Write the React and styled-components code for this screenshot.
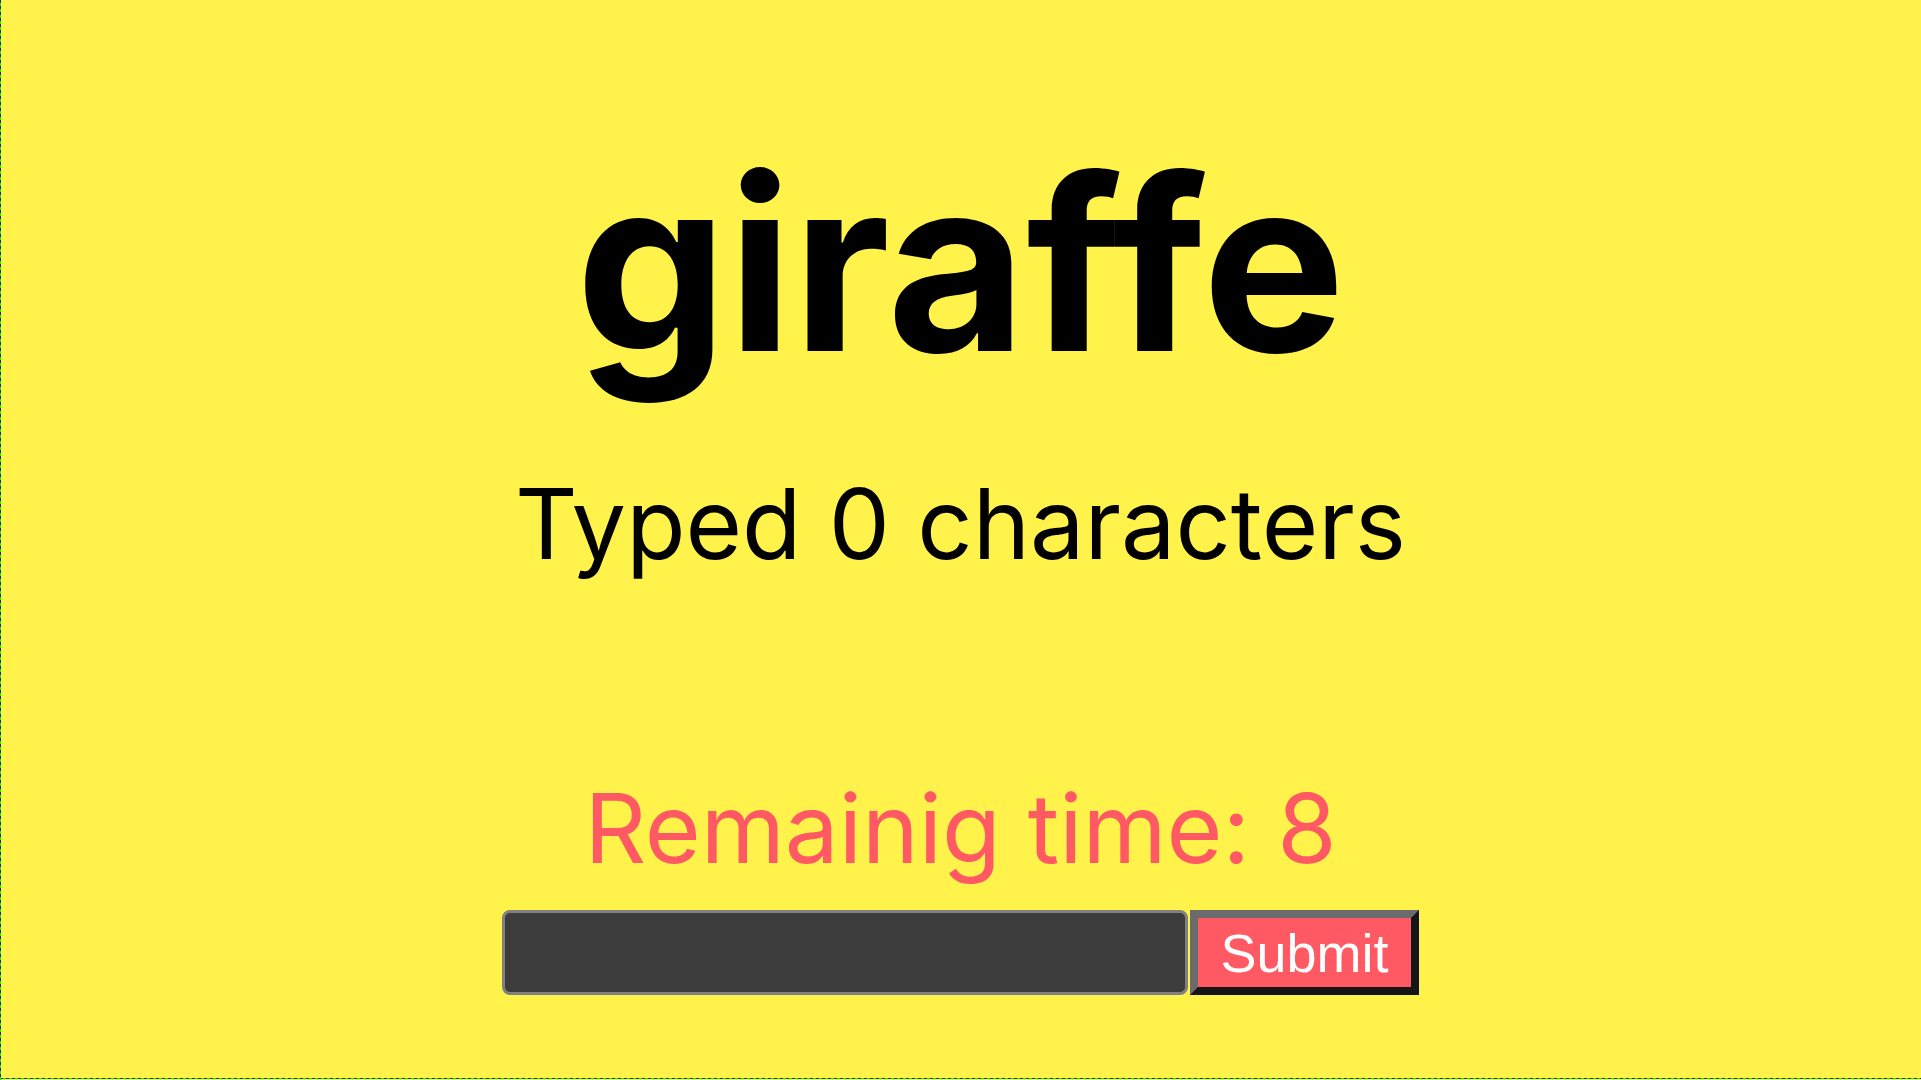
import React, { useState } from "react"
import styled, { createGlobalStyle } from "styled-components"

const GlobalStyle = createGlobalStyle`
  html, body {
    margin: 0;
    padding: 0;
    background: #fff24b;
  }
  * {
    box-sizing: border-box;
  }
`

// yellow page, with the dashed green/dark guide line on the left and bottom edge
const Page = styled.div`
  width: 100vw;
  height: 100vh;
  overflow: hidden;
  display: flex;
  flex-direction: column;
  align-items: center;
  padding-top: 144px;
  font-family: Inter, "Noto Sans", sans-serif;
  font-variant-ligatures: none;
  font-feature-settings: "liga" 0, "calt" 0, "clig" 0, "dlig" 0;
  background-color: #fff24b;
  background-image:
    repeating-linear-gradient(to bottom, #2b2b2b 0 3px, #00ff00 3px 6px),
    repeating-linear-gradient(to right, #2b2b2b 0 3px, #00ff00 3px 6px);
  background-size: 1px 100%, 100% 1px;
  background-position: left top, left calc(100% - 1px);
  background-repeat: no-repeat;
`

const Word = styled.h1`
  margin: 0;
  font-size: 240px;
  line-height: 1;
  font-weight: 700;
  color: #000;
`

const Counter = styled.p`
  margin: 91px 0 0;
  font-size: 97px;
  line-height: 1;
  font-weight: 400;
  color: #000;
`

const Timer = styled.p`
  margin: 208px 0 0;
  font-size: 96px;
  line-height: 1;
  font-weight: 400;
  color: #ff5a64;
`

const Form = styled.form`
  display: flex;
  gap: 2px;
  margin-top: 34px;
`

const Input = styled.input`
  width: 686px;
  height: 85px;
  border: 3px solid #808080;
  border-radius: 8px;
  background: #3c3c3c;
  color: #fff;
  font-size: 40px;
  padding: 0 16px;
  outline: none;
`

const Button = styled.button`
  width: 229px;
  height: 85px;
  border-style: solid;
  border-width: 8px;
  border-color: #6b6b6b #161616 #161616 #6b6b6b;
  background: #ff5a64;
  color: #fff;
  font-family: "Liberation Sans", Arial, sans-serif;
  font-size: 54px;
  padding: 0;
  cursor: pointer;
`

const App = () => {
  const [text, setText] = useState("")

  return (
    <>
      <GlobalStyle />
      <Page>
        <Word>giraffe</Word>
        <Counter>Typed {text.length} characters</Counter>
        <Timer>Remainig time: 8</Timer>
        <Form onSubmit={e => e.preventDefault()}>
          <Input value={text} onChange={e => setText(e.target.value)} />
          <Button type="submit">Submit</Button>
        </Form>
      </Page>
    </>
  )
}

export default App
